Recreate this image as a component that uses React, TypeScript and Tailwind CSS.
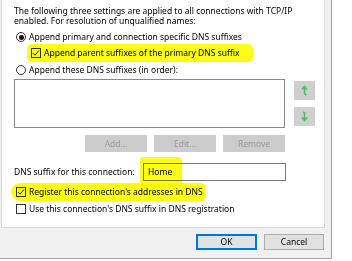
import React from "react";

const font = { fontFamily: '"Noto Sans", "Open Sans", sans-serif' };

function Radio({ checked }: { checked?: boolean }) {
  return (
    <span className="flex h-[10px] w-[10px] shrink-0 items-center justify-center rounded-full border border-[#333] bg-white">
      {checked && <span className="h-[5px] w-[5px] rounded-full bg-[#111]" />}
    </span>
  );
}

function Check({ checked }: { checked?: boolean }) {
  return (
    <span className="flex h-[10px] w-[10px] shrink-0 items-center justify-center border border-[#333] bg-white">
      {checked && (
        <svg width="8" height="8" viewBox="0 0 8 8">
          <path d="M1 4.2 L3 6.2 L7 1.5" fill="none" stroke="#222" strokeWidth="1" />
        </svg>
      )}
    </span>
  );
}

function ArrowButton({ down }: { down?: boolean }) {
  return (
    <div className="flex h-[19px] w-[21px] items-center justify-center bg-[#cfcfcf]">
      <svg width="9" height="11" viewBox="0 0 9 11">
        {down ? (
          <path d="M3 1 L4.5 2 L4.5 8 M2 6.5 L4.5 9.5 L7 6.5" fill="none" stroke="#5cb85c" strokeWidth="1.6" />
        ) : (
          <path d="M4.5 9 L4.5 3 M2 4.5 L4.5 1.5 L7 4.5 M4.5 9 L6.5 10" fill="none" stroke="#5cb85c" strokeWidth="1.6" />
        )}
      </svg>
    </div>
  );
}

function GrayButton({ label }: { label: string }) {
  return (
    <div className="flex h-[17px] w-[62px] items-center justify-center bg-[#cccccc] text-[#9a9a9a]">
      {label}
    </div>
  );
}

export default function App() {
  return (
    <div className="h-[261px] w-[352px] overflow-hidden bg-white text-[8.5px] leading-[10px] text-black" style={font}>
      <div className="relative h-[259px] w-[332px] border-r border-b border-[#a3a3a3] bg-[#f0f0f0]">
        <div className="ml-px flex h-[228px] w-[324px] flex-col border-r border-b border-l border-[#d9d9d9] bg-white pt-[6px] pl-[12px]">
          <p>The following three settings are applied to all connections with TCP/IP</p>
          <p>enabled. For resolution of unqualified names:</p>
          <div className="mt-[6px] flex items-center gap-[3px] pl-[2px]">
            <Radio checked />
            <span>Append primary and connection specific DNS suffixes</span>
          </div>
          <div className="mt-[6px] flex items-center gap-[3px] pl-[17px]">
            <Check checked />
            <span>Append parent suffixes of the primary DNS suffix</span>
          </div>
          <div className="mt-[7px] flex items-center gap-[3px] pl-[2px]">
            <Radio />
            <span>Append these DNS suffixes (in order):</span>
          </div>
          <div className="mt-[4px] flex gap-[9px]">
            <div className="h-[49px] w-[271px] border border-[#8a8a8a] bg-white" />
            <div className="flex flex-col gap-[7px] pt-[2px]">
              <ArrowButton />
              <ArrowButton down />
            </div>
          </div>
          <div className="mt-[7px] flex w-[271px] justify-end gap-[7px]">
            <GrayButton label="Add..." />
            <GrayButton label="Edit..." />
            <GrayButton label="Remove" />
          </div>
          <div className="mt-[11px] flex items-center">
            <span className="w-[129px]">DNS suffix for this connection:</span>
            <div className="flex h-[18px] w-[143px] items-center border border-[#7a7a7a] bg-white pl-[4px]">Home</div>
          </div>
          <div className="mt-[6px] flex items-center gap-[3px] pl-[2px]">
            <Check checked />
            <span>Register this connection's addresses in DNS</span>
          </div>
          <div className="mt-[7px] flex items-center gap-[3px] pl-[2px]">
            <Check />
            <span>Use this connection's DNS suffix in DNS registration</span>
          </div>
        </div>
        <div className="mt-[6px] flex justify-end gap-[7px] pr-[7px]">
          <div className="flex h-[16px] w-[61px] items-center justify-center border-2 border-[#0078d7] bg-[#e1e1e1]">OK</div>
          <div className="flex h-[16px] w-[60px] items-center justify-center border border-[#adadad] bg-[#e1e1e1]">Cancel</div>
        </div>
        {/* highlighter marks */}
        <div className="pointer-events-none absolute top-[44px] left-[27px] h-[18px] w-[226px] rounded-[5px] bg-[#fcfc14] mix-blend-multiply" />
        <div className="pointer-events-none absolute top-[157px] left-[140px] h-[30px] w-[42px] rounded-[4px] bg-[#fcfc14] mix-blend-multiply" />
        <div className="pointer-events-none absolute top-[183px] left-[11px] h-[18px] w-[194px] rounded-l-[10px] rounded-r-[4px] bg-[#fcfc14] mix-blend-multiply" />
      </div>
    </div>
  );
}
